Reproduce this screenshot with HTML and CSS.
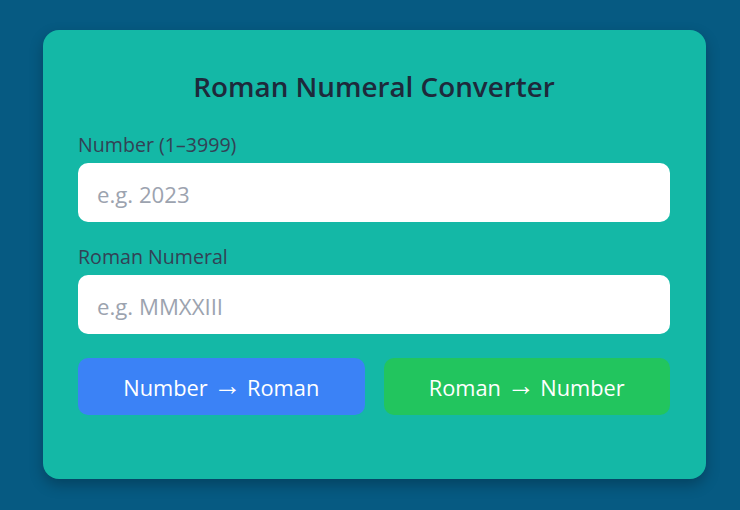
FILE: index.html
```
<!DOCTYPE html>
<html lang="en">
<head>
<meta charset="utf-8">
<title>Roman Numeral Converter</title>
<link rel="stylesheet" href="styles.css">
</head>
<body>
<main class="card">
  <h1 class="title">Roman Numeral Converter</h1>
  <div class="field">
    <label class="label" for="num">Number (1–3999)</label>
    <input class="input" id="num" type="text" placeholder="e.g. 2023">
  </div>
  <div class="field">
    <label class="label" for="rom">Roman Numeral</label>
    <input class="input" id="rom" type="text" placeholder="e.g. MMXXIII">
  </div>
  <div class="actions">
    <button class="btn btn-blue" type="button">Number <span class="arrow">→</span> Roman</button>
    <button class="btn btn-green" type="button">Roman <span class="arrow">→</span> Number</button>
  </div>
</main>
</body>
</html>
```
FILE: styles.css
```
* { box-sizing: border-box; }
html, body { margin: 0; height: 100%; }
body {
  background: #065a82;
  font-family: "Open Sans", "Noto Sans", sans-serif;
  padding: 30px 34px 0 43px;
}
.card {
  width: 663px;
  height: 449px;
  background: #14b8a6;
  border-radius: 16px;
  box-shadow: 0 6px 14px rgba(0, 0, 0, 0.25);
  padding: 41px 36px 0 35px;
}
.title {
  margin: 0 0 31px;
  text-align: center;
  font-size: 27.8px;
  line-height: 31px;
  font-weight: 600;
  color: #1e293b;
}
.field { margin-bottom: 23px; }
.field + .field { margin-bottom: 24px; }
.label {
  display: block;
  font-size: 19.6px;
  line-height: 24px;
  color: #334155;
  margin-bottom: 6px;
}
.input {
  display: block;
  width: 100%;
  height: 59px;
  border: none;
  border-radius: 10px;
  background: #fff;
  padding: 3px 19px 0;
  font-family: inherit;
  font-size: 22.2px;
  color: #1e293b;
  outline: none;
}
.input::placeholder { color: #9ca3af; }
.actions {
  display: flex;
  gap: 19px;
}
.btn {
  flex: 1;
  height: 57px;
  border: none;
  border-radius: 10px;
  padding: 3px 0 0;
  color: #fff;
  font-family: inherit;
  font-size: 21.8px;
  line-height: 1;
  cursor: pointer;
}
.arrow {
  font-family: "Liberation Sans", sans-serif;
  font-size: 28px;
  line-height: 0;
  vertical-align: 1px;
}
.btn-blue { background: #3b82f6; }
.btn-green { background: #22c55e; }
```
